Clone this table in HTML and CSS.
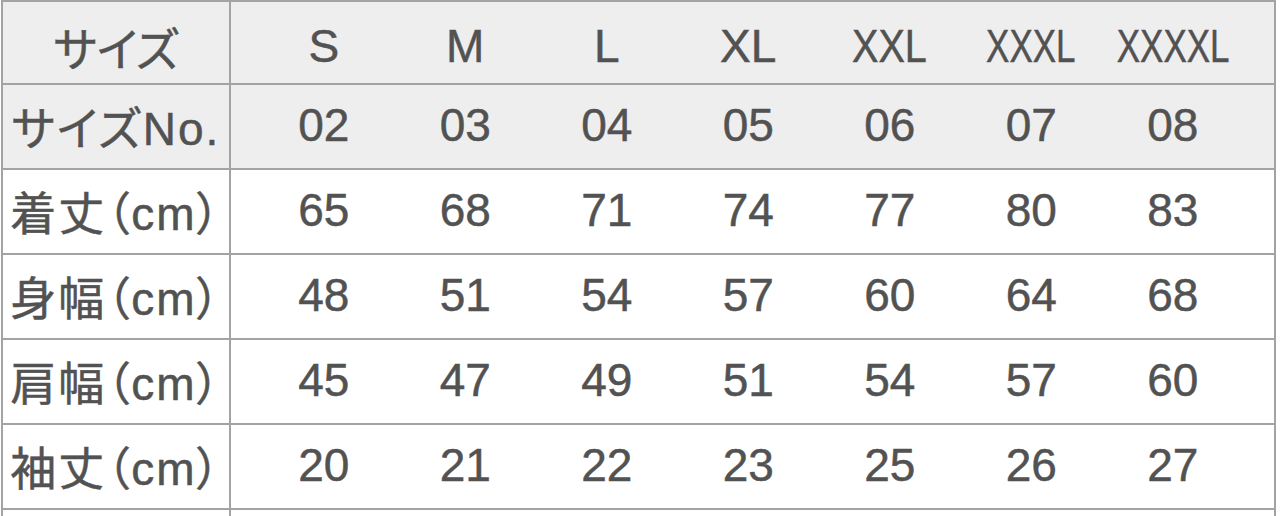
FILE: index.html
```html
<!DOCTYPE html>
<html lang="ja">
<head>
<meta charset="utf-8">
<title>サイズ表</title>
<link rel="stylesheet" href="styles.css">
</head>
<body>
<div class="size-table">
  <div class="row row-head row-first">
    <div class="label">サイズ</div>
    <div class="cells">
      <span class="cell">S</span>
      <span class="cell">M</span>
      <span class="cell">L</span>
      <span class="cell">XL</span>
      <span class="cell"><span class="narrow-1">XXL</span></span>
      <span class="cell"><span class="narrow-2">XXXL</span></span>
      <span class="cell"><span class="narrow-2">XXXXL</span></span>
    </div>
  </div>
  <div class="row row-head">
    <div class="label">サイズNo.</div>
    <div class="cells">
      <span class="cell">02</span><span class="cell">03</span><span class="cell">04</span><span class="cell">05</span><span class="cell">06</span><span class="cell">07</span><span class="cell">08</span>
    </div>
  </div>
  <div class="row">
    <div class="label">着丈（cm）</div>
    <div class="cells">
      <span class="cell">65</span><span class="cell">68</span><span class="cell">71</span><span class="cell">74</span><span class="cell">77</span><span class="cell">80</span><span class="cell">83</span>
    </div>
  </div>
  <div class="row">
    <div class="label">身幅（cm）</div>
    <div class="cells">
      <span class="cell">48</span><span class="cell">51</span><span class="cell">54</span><span class="cell">57</span><span class="cell">60</span><span class="cell">64</span><span class="cell">68</span>
    </div>
  </div>
  <div class="row">
    <div class="label">肩幅（cm）</div>
    <div class="cells">
      <span class="cell">45</span><span class="cell">47</span><span class="cell">49</span><span class="cell">51</span><span class="cell">54</span><span class="cell">57</span><span class="cell">60</span>
    </div>
  </div>
  <div class="row">
    <div class="label">袖丈（cm）</div>
    <div class="cells">
      <span class="cell">20</span><span class="cell">21</span><span class="cell">22</span><span class="cell">23</span><span class="cell">25</span><span class="cell">26</span><span class="cell">27</span>
    </div>
  </div>
  <div class="row">
    <div class="label"></div>
    <div class="cells"></div>
  </div>
</div>
</body>
</html>
```

FILE: styles.css
```css
html, body {
  margin: 0;
  padding: 0;
  background: #ffffff;
  overflow: hidden;
}

body {
  width: 1280px;
  height: 516px;
  font-family: "Liberation Sans", "Noto Sans CJK JP", sans-serif;
  color: #525252;
  -webkit-text-stroke: 0.5px #525252;
}

.size-table {
  margin-left: 1px;
  width: 1275px;
  box-sizing: border-box;
  border-left: 2px solid #a3a3a3;
  border-right: 2px solid #a3a3a3;
  border-top: 2px solid #a3a3a3;
}

.row {
  display: flex;
  height: 85px;
  box-sizing: border-box;
  border-bottom: 2px solid #a3a3a3;
}

.row-first {
  height: 83px;
}

.row-head {
  background: #eeeeee;
}

.label {
  width: 228px;
  flex: none;
  box-sizing: border-box;
  border-right: 2px solid #a3a3a3;
  display: flex;
  align-items: center;
  justify-content: center;
  font-size: 46px;
  font-feature-settings: "palt";
  letter-spacing: 2px;
  white-space: nowrap;
  padding-bottom: 4px;
}

.cells {
  flex: 1;
  display: grid;
  grid-template-columns: repeat(7, 141.5px);
  padding-left: 22px;
}

.cell {
  display: flex;
  align-items: center;
  justify-content: center;
  font-size: 46px;
  padding-bottom: 4px;
}

.row-first .label,
.row-first .cell {
  padding-bottom: 0;
  padding-top: 6px;
}

.row-first .label {
  letter-spacing: 0;
}

.narrow-1 {
  display: inline-block;
  transform: scaleX(0.86);
}

.narrow-2 {
  display: inline-block;
  transform: scaleX(0.76);
}
```
